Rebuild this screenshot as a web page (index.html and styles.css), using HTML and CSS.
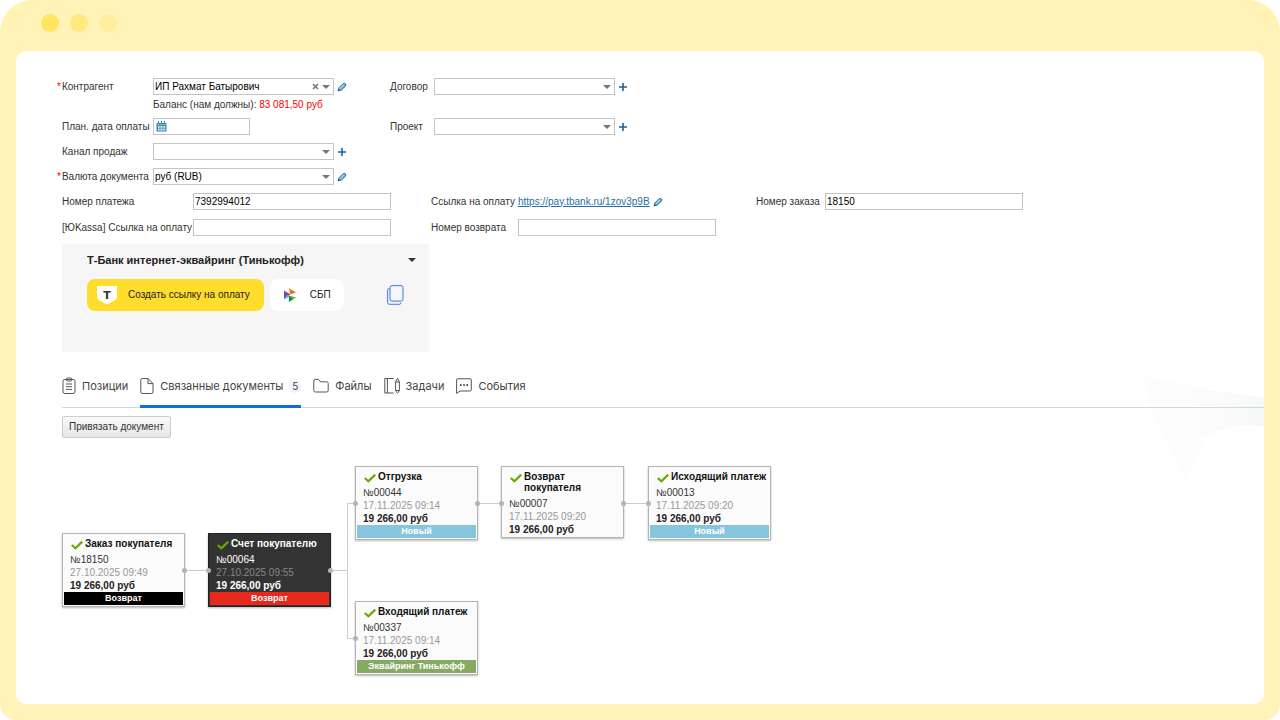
FILE: index.html
```html
<!DOCTYPE html>
<html lang="ru">
<head>
  <meta charset="UTF-8" />
  <meta name="viewport" content="width=device-width, initial-scale=1" />
  <title>Счет покупателю</title>
  <link rel="stylesheet" href="styles.css">
</head>
<body>
  <!-- shared icons -->
  <svg class="sprite" aria-hidden="true">
    <symbol id="pencil" viewBox="0 0 10 10">
      <path d="M1.2 8.8 L1.8 6 L6 1.8 Q7.2 .8 8.4 1.8 Q9.4 3 8.4 4.2 L4.2 8.2 Z" fill="#5fa9dc" stroke="#2d6c9c" stroke-width=".9"/>
      <path d="M3 6.6 L7 2.8" stroke="#a8d6f2" stroke-width="1.2"/>
      <path d="M.8 9.2 L1.4 7 L3 8.6 Z" fill="#39454e"/>
    </symbol>
    <symbol id="plus" viewBox="0 0 10 10">
      <path d="M5 1 V9 M1 5 H9" stroke="#1b6299" stroke-width="1.6"/>
    </symbol>
    <symbol id="check" viewBox="0 0 12 10">
      <path d="M.8 5 L4.4 8.2 L11.2 1.6" fill="none" stroke="#68ab00" stroke-width="2.2"/>
    </symbol>
  </svg>

  <div class="frame">
    <div class="titlebar">
      <span class="dot"></span>
      <span class="dot dot-2"></span>
      <span class="dot dot-3"></span>
    </div>

    <main class="window">
      <svg class="shade" viewBox="0 0 120 110" aria-hidden="true">
        <defs>
          <linearGradient id="fade" x1="0" x2="1" y1="0" y2="0">
            <stop offset="0" stop-color="#fdfdfd"/>
            <stop offset="1" stop-color="#f7f8f8"/>
          </linearGradient>
        </defs>
        <path d="M0 4 L62 16 L60 70 L41 108 L7 38 Z" fill="#fdfdfd"/>
        <path d="M41 14 L120 26 V54 Q84 50 59 66 Z" fill="url(#fade)"/>
      </svg>

      <form class="form">
        <div class="fields">
          <label class="required" for="agent">Контрагент</label>
          <div class="control">
            <div class="select">
              <select id="agent"><option>ИП Рахмат Батырович</option></select>
              <button type="button" class="clear" aria-label="Очистить">
                <svg viewBox="0 0 7 7"><path d="M1 1 L6 6 M6 1 L1 6" stroke="#777" stroke-width="1.6"/></svg>
              </button>
            </div>
            <button type="button" class="icon-btn" aria-label="Изменить контрагента"><svg><use href="#pencil"/></svg></button>
          </div>
          <label for="contract">Договор</label>
          <div class="control">
            <div class="select">
              <select id="contract"><option></option></select>
            </div>
            <button type="button" class="icon-btn" aria-label="Добавить договор"><svg><use href="#plus"/></svg></button>
          </div>

          <p class="balance">Баланс (нам должны): <span class="debt">83 081,50 руб</span></p>

          <label for="plan">План. дата оплаты</label>
          <div class="control date">
            <input id="plan" type="text">
            <svg class="calendar" viewBox="0 0 11 11" aria-hidden="true">
              <path d="M.5 2 H10.5 V10.5 H.5 Z" fill="#3d87b0"/>
              <path d="M2.5 0 V3 M5.5 0 V3 M8.5 0 V3" stroke="#3d87b0" stroke-width="1"/>
              <path d="M2 5 H9.2 V9.5 H2 Z" fill="#e8f3f9"/>
              <path d="M1 7.2 H10 M4 4.5 V10 M7 4.5 V10" stroke="#3d87b0" stroke-width=".8"/>
              <path d="M1 3.5 H10" stroke="#9cc8df" stroke-width=".7"/>
            </svg>
          </div>
          <label for="project">Проект</label>
          <div class="control">
            <div class="select">
              <select id="project"><option></option></select>
            </div>
            <button type="button" class="icon-btn" aria-label="Добавить проект"><svg><use href="#plus"/></svg></button>
          </div>

          <label class="first" for="channel">Канал продаж</label>
          <div class="control">
            <div class="select">
              <select id="channel"><option></option></select>
            </div>
            <button type="button" class="icon-btn" aria-label="Добавить канал"><svg><use href="#plus"/></svg></button>
          </div>

          <label class="required first" for="currency">Валюта документа</label>
          <div class="control">
            <div class="select">
              <select id="currency"><option>руб (RUB)</option></select>
            </div>
            <button type="button" class="icon-btn" aria-label="Изменить валюту"><svg><use href="#pencil"/></svg></button>
          </div>
        </div>

        <div class="extra">
          <label for="payment">Номер платежа</label>
          <input id="payment" type="text" value="7392994012">
          <span>Ссылка на оплату</span>
          <div class="control">
            <a href="https://pay.tbank.ru/1zov3p9B">https://pay.tbank.ru/1zov3p9B</a>
            <button type="button" class="icon-btn" aria-label="Изменить ссылку"><svg><use href="#pencil"/></svg></button>
          </div>
          <label for="order">Номер заказа</label>
          <input id="order" type="text" value="18150">

          <label for="yookassa">[ЮKassa] Ссылка на оплату</label>
          <input id="yookassa" type="text">
          <label for="refund">Номер возврата</label>
          <input id="refund" type="text">
        </div>
      </form>

      <section class="widget">
        <div class="widget-head">
          <h2>Т-Банк интернет-эквайринг (Тинькофф)</h2>
          <button type="button" class="toggle" aria-label="Свернуть"></button>
        </div>
        <div class="widget-actions">
          <button type="button" class="pay">
            <svg class="shield" viewBox="0 0 20 20" aria-hidden="true">
              <path d="M0 1 H20 V11 Q20 14 17.5 15.6 L10 19.6 L2.5 15.6 Q0 14 0 11 Z" fill="#fff"/>
              <text x="10" y="14" text-anchor="middle">T</text>
            </svg>
            Создать ссылку на оплату
          </button>
          <button type="button" class="sbp">
            <svg viewBox="0 0 12 14" aria-hidden="true">
              <path d="M0 2.4 L3.4 7 L0 11.6 Z" fill="#5b57a2"/>
              <path d="M0 2.4 L6.4 6.4 L3.4 7.6 Z" fill="#b8266f"/>
              <path d="M4.8 0 L8.6 2.4 L6 6.4 Z" fill="#f39a1c"/>
              <path d="M12 4.6 L5.6 6.2 L7.4 1.8 Z" fill="#ed5f26"/>
              <path d="M0 11.6 L3.4 6.8 L6.4 8 Z" fill="#51aee2"/>
              <path d="M5 7.4 L12 9.6 L8.4 11.8 Z" fill="#63b22f"/>
              <path d="M5 7.4 L8.8 11.6 L4.8 14 Z" fill="#0a8a3f"/>
            </svg>
            СБП
          </button>
          <button type="button" class="copy" aria-label="Копировать">
            <svg viewBox="0 0 17 20">
              <rect x="3" y=".6" width="13" height="15.5" rx="2" fill="none" stroke="#3d78e6" stroke-width="1"/>
              <path d="M2.6 3.5 Q.6 3.5 .6 5.5 V17.4 Q.6 19.3 2.6 19.3 H12 Q14 19.3 14 17.6" fill="none" stroke="#3d78e6" stroke-width="1"/>
            </svg>
          </button>
        </div>
      </section>

      <nav class="tabs">
        <a class="tab" href="#positions">
          <svg class="narrow" viewBox="0 0 14 18"><rect x="1" y="2.5" width="12" height="14" rx="1.8"/><rect x="4.2" y="1" width="5.6" height="3" rx="1"/><path d="M4 7 H10 M4 9.7 H10 M4 12.4 H10"/></svg>
          Позиции
        </a>
        <a class="tab active" href="#linked">
          <svg class="narrow" viewBox="0 0 14 18"><path d="M2.2 1.5 H8 L13 6.6 V15 Q13 16.5 11.6 16.5 H2.2 Q.8 16.5 .8 15 V3 Q.8 1.5 2.2 1.5 Z M8 1.5 V6.6 H13"/></svg>
          Связанные документы
          <span class="count">5</span>
        </a>
        <a class="tab" href="#files">
          <svg viewBox="0 0 16 18"><path d="M.8 13.4 V4 Q.8 2.4 2.4 2.4 H5 Q6 2.4 6.5 3.4 L7.2 4.8 H13.6 Q15.2 4.8 15.2 6.4 V13.4 Q15.2 15 13.6 15 H2.4 Q.8 15 .8 13.4 Z"/></svg>
          Файлы
        </a>
        <a class="tab" href="#tasks">
          <svg viewBox="0 0 16 18"><path d="M9.6 1.5 H.8 V16 H9.6 M3.4 1.5 V16 M11.6 5 L13.5 1.2 L15.4 5 V13.5 H11.6 Z M11.6 5 H15.4 M12.2 13.5 V15 Q13.5 17.4 14.8 15 V13.5"/></svg>
          Задачи
        </a>
        <a class="tab" href="#events">
          <svg viewBox="0 0 16 18"><path d="M.6 16.4 V3 Q.6 1.8 1.8 1.8 H14 Q15.3 1.8 15.3 3 V12.8 Q15.3 14 14 14 H4.2 Z"/><path class="dots" d="M4 8 H5.6 M7.2 8 H8.8 M10.4 8 H12"/></svg>
          События
        </a>
      </nav>

      <button type="button" class="link-doc">Привязать документ</button>

      <div class="graph">
        <svg class="edges" width="720" height="220" aria-hidden="true">
          <path d="M123 104.5 H146 M269 104.5 H285.5 M293 37.5 H285.5 V172.5 H293 M416 37.5 H439 M562 37.5 H586"/>
        </svg>

        <article class="node order">
          <h3><svg><use href="#check"/></svg>Заказ покупателя</h3>
          <p>№18150</p>
          <time>27.10.2025 09:49</time>
          <strong>19 266,00 руб</strong>
          <div class="status black">Возврат</div>
          <i class="port out"></i>
        </article>
        <article class="node invoice">
          <h3><svg><use href="#check"/></svg>Счет покупателю</h3>
          <p>№00064</p>
          <time>27.10.2025 09:55</time>
          <strong>19 266,00 руб</strong>
          <div class="status red">Возврат</div>
          <i class="port in"></i><i class="port out"></i>
        </article>
        <article class="node shipment">
          <h3><svg><use href="#check"/></svg>Отгрузка</h3>
          <p>№00044</p>
          <time>17.11.2025 09:14</time>
          <strong>19 266,00 руб</strong>
          <div class="status blue">Новый</div>
          <i class="port in"></i><i class="port out"></i>
        </article>
        <article class="node return">
          <h3><svg><use href="#check"/></svg>Возврат покупателя</h3>
          <p>№00007</p>
          <time>17.11.2025 09:20</time>
          <strong>19 266,00 руб</strong>
          <i class="port in"></i><i class="port out"></i>
        </article>
        <article class="node outgoing">
          <h3><svg><use href="#check"/></svg>Исходящий платеж</h3>
          <p>№00013</p>
          <time>17.11.2025 09:20</time>
          <strong>19 266,00 руб</strong>
          <div class="status blue">Новый</div>
          <i class="port in"></i>
        </article>
        <article class="node incoming">
          <h3><svg><use href="#check"/></svg>Входящий платеж</h3>
          <p>№00337</p>
          <time>17.11.2025 09:14</time>
          <strong>19 266,00 руб</strong>
          <div class="status green">Эквайринг Тинькофф</div>
          <i class="port in"></i>
        </article>
      </div>
    </main>
  </div>
</body>
</html>
```
FILE: styles.css
```css
* {
  box-sizing: border-box;
}
body {
  margin: 0;
  background: #fff;
  color: #333;
  font-family: "Liberation Sans", Arial, sans-serif;
  font-size: 10px;
  line-height: 12px;
}
h2, h3, p {
  margin: 0;
}
button, input, select {
  font: inherit;
  color: inherit;
}
button {
  border: 0;
  padding: 0;
  background: none;
  cursor: pointer;
}
svg {
  display: block;
}
.sprite {
  display: none;
}

/* window frame */
.frame {
  display: flex;
  flex-direction: column;
  min-height: 100vh;
  padding: 0 16px 16px;
  background: #fff3b8;
  border-radius: 32px 32px 16px 16px;
}
.titlebar {
  display: flex;
  gap: 11px;
  height: 51px;
  padding: 14px 0 0 25px;
}
.dot {
  width: 18px;
  height: 18px;
  border-radius: 50%;
  background: #ffe562;
}
.dot-2 {
  background: #ffea80;
}
.dot-3 {
  background: #ffee9c;
}
.window {
  position: relative;
  isolation: isolate;
  flex: 1;
  padding: 27px 0 0 46px;
  background: #fff;
  border-radius: 10px;
}
.shade {
  position: absolute;
  z-index: -1;
  top: 321px;
  right: 0;
  width: 120px;
  height: 110px;
}

/* form */
.fields {
  display: grid;
  grid-template-columns: 91px 237px 44px 237px;
  align-items: center;
}
.fields > .control,
.fields > label {
  margin-bottom: 8px;
}
.fields .balance {
  grid-column: 2 / -1;
  margin: -4px 0 7px;
}
.fields .first {
  grid-column: 1;
}
.required::before {
  content: "*";
  color: #f00;
  margin-left: -5px;
  margin-right: 1px;
}
.debt {
  color: #f00;
}
.control {
  display: flex;
  align-items: center;
  gap: 3px;
}
input, select {
  height: 17px;
  margin: 0;
  padding: 0 1px;
  border: 1px solid #c4c4c4;
  border-radius: 0;
  background: #fff;
  color: #000;
}
.select {
  position: relative;
  width: 181px;
}
select {
  display: block;
  width: 100%;
  appearance: none;
}
.select::after {
  content: "";
  position: absolute;
  right: 4px;
  top: 7px;
  border: 4px solid transparent;
  border-top-color: #777;
  border-bottom: 0;
  pointer-events: none;
}
.clear {
  position: absolute;
  right: 15px;
  top: 5px;
}
.clear svg {
  width: 7px;
  height: 7px;
}
.icon-btn svg {
  width: 10px;
  height: 10px;
}
.date {
  position: relative;
}
.date input {
  width: 97px;
  padding-left: 18px;
}
.calendar {
  position: absolute;
  left: 3px;
  top: 3px;
  width: 11px;
  height: 11px;
}
.extra {
  display: grid;
  grid-template-columns: 131px 238px 87px 238px 69px 198px;
  row-gap: 9px;
  align-items: center;
}
.extra label {
  white-space: nowrap;
}
.extra input {
  width: 198px;
}
a {
  color: #1f6fa8;
}

/* payment widget */
.widget {
  width: 367px;
  min-height: 108px;
  margin-top: 8px;
  padding: 9px 13px 9px 25px;
  background: #f6f6f6;
}
.widget-head {
  display: flex;
  justify-content: space-between;
  align-items: center;
}
.widget h2 {
  font-size: 11px;
  line-height: 14px;
  color: #222;
}
.toggle {
  border: 4px solid transparent;
  border-top-color: #333;
  border-bottom: 0;
}
.widget-actions {
  display: flex;
  align-items: center;
  gap: 6px;
  margin-top: 12px;
}
.pay, .sbp {
  display: flex;
  align-items: center;
  height: 32px;
  border-radius: 8px;
  color: #222;
}
.pay {
  gap: 11px;
  padding: 0 14px 0 10px;
  background: #ffdd2d;
}
.shield {
  width: 20px;
  height: 20px;
}
.shield text {
  font-family: "DejaVu Sans", sans-serif;
  font-size: 11px;
  font-weight: bold;
  fill: #333;
}
.sbp {
  gap: 14px;
  padding: 0 13px 0 14px;
  background: #fff;
}
.sbp svg {
  width: 12px;
  height: 14px;
}
.copy {
  margin: 0 12px 0 auto;
}
.copy svg {
  width: 17px;
  height: 20px;
}

/* tabs */
.tabs {
  display: flex;
  gap: 12px;
  height: 38px;
  margin-top: 18px;
  border-bottom: 1px solid #d4d6e0;
  font-family: Inter, sans-serif;
  font-size: 11px;
}
.tab {
  display: flex;
  align-items: center;
  gap: 6px;
  height: 38px;
  padding-bottom: 4px;
  border-bottom: 3px solid transparent;
  color: #444;
  text-decoration: none;
}
.tab.active {
  border-color: #0f6be0;
}
.tab svg {
  width: 16px;
  height: 18px;
  fill: none;
  stroke: #555;
}
.tab svg.narrow {
  width: 14px;
}
.tab .dots {
  stroke-width: 2;
}
.count {
  width: 12px;
  height: 14px;
  border-radius: 6px;
  background: #f0f3fa;
  font-size: 10px;
  line-height: 14px;
  text-align: center;
}
.link-doc {
  height: 22px;
  margin-top: 8px;
  padding: 0 6px;
  border: 1px solid #ccc;
  border-radius: 2px;
  background: linear-gradient(#fafafa, #e6e6e6);
}

/* document graph */
.graph {
  position: relative;
  height: 220px;
  margin-top: 28px;
}
.edges {
  position: absolute;
  left: 0;
  top: 0;
  fill: none;
  stroke: #ccc;
}
.node {
  position: absolute;
  width: 123px;
  padding: 4px 1px 1px;
  border: 1px solid #b4b4b4;
  background: #fbfbfb;
  box-shadow: 0 1px 2px #bbb;
}
.order {
  left: 0;
  top: 67px;
}
.invoice {
  left: 146px;
  top: 67px;
}
.shipment {
  left: 293px;
  top: 0;
}
.return {
  left: 439px;
  top: 0;
}
.outgoing {
  left: 586px;
  top: 0;
}
.incoming {
  left: 293px;
  top: 135px;
}
.node h3 {
  display: flex;
  gap: 2px;
  padding-left: 7px;
  margin-bottom: 4px;
  color: #111;
  font-size: 10px;
  line-height: 11px;
}
.node h3 svg {
  flex: none;
  width: 12px;
  height: 10px;
  margin-top: 2px;
  margin-bottom: -2px;
}
.node p, .node time, .node strong {
  display: block;
  padding-left: 6px;
  line-height: 13px;
}
.node time {
  color: #999;
}
.node strong {
  color: #222;
}
.invoice {
  border-color: #222;
  background: #333;
}
.invoice h3, .invoice p, .invoice strong {
  color: #fff;
}
.invoice time {
  color: #888;
}
.status {
  height: 13px;
  color: #fff;
  font-size: 9px;
  font-weight: bold;
  line-height: 13px;
  text-align: center;
}
.black {
  background: #000;
}
.red {
  background: #e8281a;
}
.blue {
  background: #86c5de;
}
.green {
  background: #86aa62;
}
.port {
  position: absolute;
  top: 34px;
  width: 5px;
  height: 5px;
  border-radius: 50%;
  background: #b4b4b4;
}
.in {
  left: -3px;
}
.out {
  right: -3px;
}
```
